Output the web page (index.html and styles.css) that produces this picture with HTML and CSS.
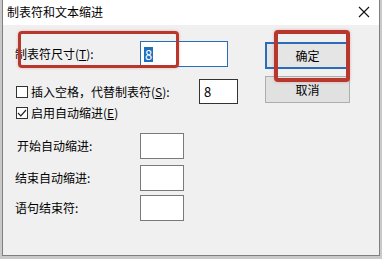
FILE: index.html
```html
<!DOCTYPE html>
<html>
<head>
<meta charset="utf-8">
<link rel="stylesheet" href="styles.css">
</head>
<body>
<div class="dialog">
  <div class="titlebar">
    <span class="title">制表符和文本缩进</span>
    <svg class="close" width="12" height="12" viewBox="0 0 12 12"><path d="M1 1 L11 11 M11 1 L1 11" stroke="#111" stroke-width="1.1" fill="none"/></svg>
  </div>
  <div class="body">
    <div class="left">
      <div class="row r1">
        <span class="lbl">制表符尺寸(<u>T</u>):</span>
        <div class="field f1"><span class="sel">8</span></div>
      </div>
      <div class="row r2">
        <span class="cb"></span>
        <span class="cbl wide">插入空格，代替制表符(<u>S</u>):</span>
        <div class="field f2">8</div>
      </div>
      <div class="row r3">
        <span class="cb"><svg width="10" height="10" viewBox="0 0 10 10"><path d="M1 5 L3.8 7.8 L9 2" stroke="#222" stroke-width="1.2" fill="none"/></svg></span>
        <span class="cbl">启用自动缩进(<u>E</u>)</span>
      </div>
      <div class="row r4">
        <span class="lbl ind">开始自动缩进:</span>
        <div class="field f3"></div>
      </div>
      <div class="row r5">
        <span class="lbl">结束自动缩进:</span>
        <div class="field f3"></div>
      </div>
      <div class="row r6">
        <span class="lbl">语句结束符:</span>
        <div class="field f3"></div>
      </div>
    </div>
    <div class="right">
      <div class="btn ok">确定</div>
      <div class="btn">取消</div>
    </div>
  </div>
  <div class="mark m1"></div>
  <div class="mark m2"></div>
</div>
</body>
</html>
```

FILE: styles.css
```css
html, body {
  margin: 0;
  padding: 0;
}
body {
  width: 382px;
  height: 259px;
  background: #c9c9c9;
  overflow: hidden;
  font-family: "Noto Sans CJK SC", "Microsoft YaHei", sans-serif;
  font-size: 12px;
  color: #000;
}
.dialog {
  position: relative;
  margin-left: 2px;
  width: 378px;
  height: 256px;
  box-sizing: border-box;
  border-left: 1px solid #7f7f7f;
  border-right: 1px solid #7f7f7f;
  border-bottom: 1px solid #7f7f7f;
  background: #f0f0f0;
  display: flex;
  flex-direction: column;
}
.titlebar {
  height: 25px;
  background: #fff;
  display: flex;
  align-items: center;
  padding-left: 4px;
  padding-right: 9px;
  flex-shrink: 0;
}
.title {
  font-size: 12px;
  flex: 1;
  line-height: 14px;
  margin-top: -1px;
}
.close {
  margin-top: -2px;
}
.body {
  flex: 1;
  display: flex;
}
.left {
  width: 262px;
  box-sizing: border-box;
  padding-left: 12px;
  padding-top: 16px;
  display: flex;
  flex-direction: column;
}
.row {
  display: flex;
  align-items: center;
}
.r1 { height: 26px; }
.r2 { height: 25px; margin-top: 12px; }
.r3 { height: 14px; margin-top: 2px; }
.r4 { height: 26px; margin-top: 13px; }
.r5 { height: 26px; margin-top: 6px; }
.r6 { height: 26px; margin-top: 4px; }
.lbl {
  width: 125px;
  line-height: 14px;
}
.ind {
  padding-left: 2px;
  box-sizing: border-box;
}
u {
  text-decoration: underline;
  text-underline-offset: 1px;
}
.field {
  box-sizing: border-box;
  height: 100%;
  background: #fff;
  display: flex;
  align-items: center;
}
.f1 {
  width: 88px;
  border: 1px solid #2b6cb8;
  padding-left: 3px;
}
.sel {
  background: #1f6fc0;
  color: #fff;
  line-height: 15px;
  padding: 0 1px;
  font-size: 13px;
}
.f2 {
  width: 39px;
  border: 1px solid #333;
  padding-left: 4px;
  font-size: 13px;
}
.f3 {
  width: 44px;
  border: 1px solid #7a7a7a;
}
.cb {
  width: 12px;
  height: 12px;
  box-sizing: border-box;
  border: 1px solid #333;
  background: #fff;
  margin-left: 1px;
  display: flex;
  align-items: center;
  justify-content: center;
}
.cbl {
  margin-left: 3px;
  line-height: 14px;
}
.wide {
  width: 168px;
}
.right {
  padding-top: 17px;
  display: flex;
  flex-direction: column;
  gap: 7px;
}
.btn {
  width: 85px;
  height: 27px;
  box-sizing: border-box;
  border: 1px solid #adadad;
  background: #e1e1e1;
  display: flex;
  align-items: center;
  justify-content: center;
  line-height: 14px;
}
.btn.ok {
  border: 2px solid #2b6cb8;
  background: #e5e5e5;
}
.mark {
  position: absolute;
  box-sizing: border-box;
  border: 3px solid #b8372c;
  border-radius: 4px;
  box-shadow: 0 0 3px rgba(200, 60, 50, 0.35);
}
.m1 {
  left: 15px;
  top: 31px;
  width: 161px;
  height: 37px;
}
.m2 {
  left: 271px;
  top: 30px;
  width: 76px;
  height: 52px;
  border-width: 4px;
}
```
